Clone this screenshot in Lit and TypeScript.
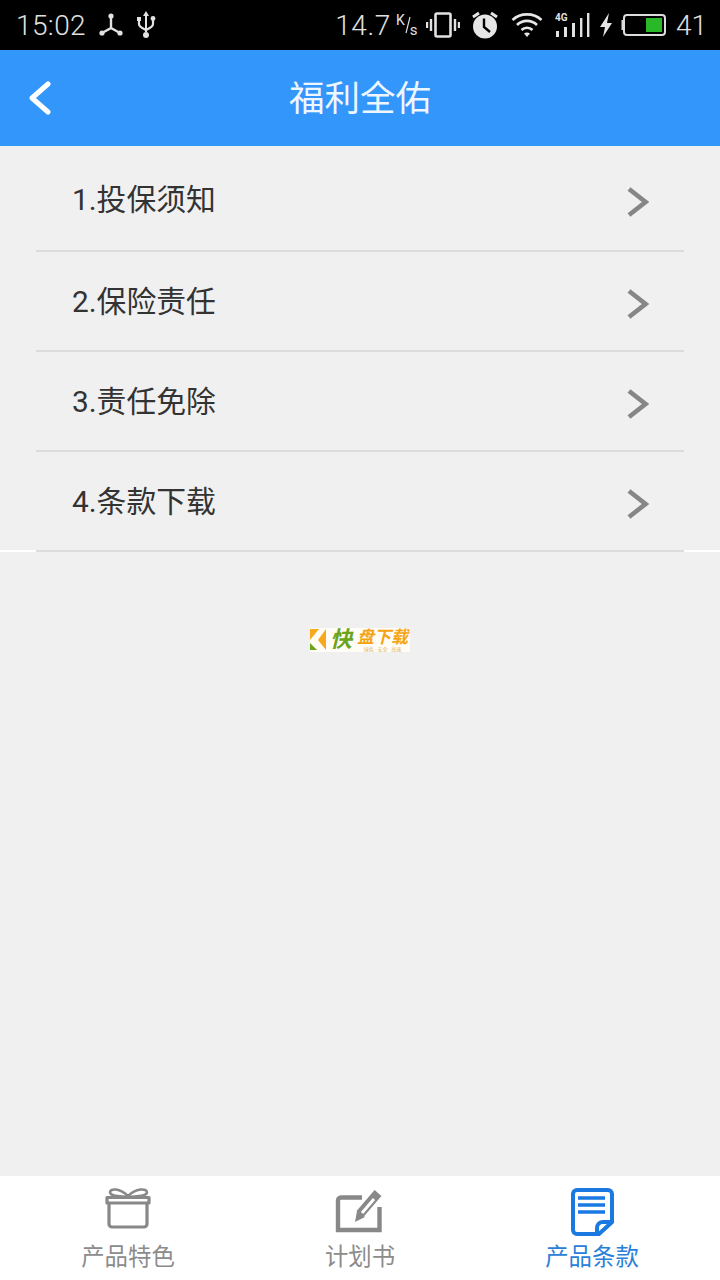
import { LitElement, html, css } from "lit";
import { customElement } from "lit/decorators.js";

const items = ["1.投保须知", "2.保险责任", "3.责任免除", "4.条款下载"];

@customElement("app-root")
export class AppRoot extends LitElement {
  static styles = css`
    :host { display: flex; flex-direction: column; width: 720px; height: 1280px; background: #f0f0f0; font-family: Roboto, "Noto Sans CJK SC", sans-serif; overflow: hidden; }
    .status { height: 50px; flex: none; background: #000; color: #e0e0e0; display: flex; align-items: center; padding: 0 13px 0 16px; box-sizing: border-box; font-weight: 300; }
    .time { font-size: 28px; width: 83px; letter-spacing: 0.4px; }
    .speed { font-size: 28px; margin-left: auto; letter-spacing: 0.6px; }
    .unit { width: 30px; margin-left: 5px; display: flex; height: 30px; font-size: 14px; font-weight: 400; line-height: 14px; }
    .unit .k { margin-top: 3px; }
    .unit .s { margin-top: 13px; margin-left: -1px; font-size: 15px; line-height: 15px; }
    .status svg { flex: none; display: block; }
    .level { font-size: 28px; margin-left: 9px; }
    .bar { height: 96px; flex: none; background: #3296fa; display: grid; place-items: center; position: relative; color: #eef6ff; font-size: 35.5px; line-height: 98px; }
    .back { position: absolute; left: 29px; top: 31px; }
    .main { flex: 1; display: flex; flex-direction: column; }
    .list { display: flex; flex-direction: column; position: relative; z-index: 1; }
    .row { height: 100px; margin: 0 36px; box-sizing: border-box; border-bottom: 2px solid #dcdcdc; display: flex; align-items: center; justify-content: space-between; padding: 0 35px 0 36px; font-size: 29.8px; color: #333; line-height: 100px; }
    .row:first-child { height: 106px; padding-top: 2px; }
    .row span { position: relative; top: 1px; }
    .row svg { position: relative; top: 3px; }
    .white { height: 2px; background: #fff; margin-top: -2px; flex: none; }
    .logo { margin: 76px auto 0; width: 100px; height: 24px; background: #fffdf5; display: flex; align-items: center; overflow: hidden; }
    .logo svg { flex: none; }
    .kuai { color: #6aa31c; font-size: 22px; font-weight: 700; font-style: italic; line-height: 24px; margin-left: 4px; }
    .logo-r { display: flex; flex-direction: column; align-items: center; margin-left: 5px; }
    .dl { color: #f6a313; font-size: 17px; font-weight: 700; font-style: italic; line-height: 17px; }
    .tiny { color: #d9b36a; font-size: 5px; line-height: 6px; }
    .tabs { height: 104px; flex: none; background: #fff; display: grid; grid-template-columns: repeat(3, 232px); padding: 0 12px; }
    .tab { display: flex; flex-direction: column; align-items: center; color: #8c8c8c; font-size: 23.4px; padding-top: 11px; }
    .tab.on { color: #2a80d8; }
    .ico { height: 46px; flex: none; }
    .ico svg { display: block; overflow: visible; }
    .lab { line-height: 32px; margin-top: 8px; }
  `;

  render() {
    return html`
      <div class="status">
        <span class="time">15:02</span>
        <svg width="26" height="26" viewBox="0 0 26 26" fill="#e2e2e2" stroke="#e2e2e2">
          <path d="M12 4V16L3 21M12 16L21 21" fill="none" stroke-width="2.4"/>
          <circle cx="12" cy="4" r="2.6" stroke="none"/><circle cx="3" cy="21" r="2.6" stroke="none"/><circle cx="21" cy="21" r="2.6" stroke="none"/>
        </svg>
        <svg width="22" height="30" viewBox="0 0 22 30" style="margin-left:10px" fill="#e2e2e2">
          <path d="M11 1l3 5h-2v16h-2V6H8z"/>
          <path d="M4 9v5c0 3 3 4 7 6 4-2 7-3 7-6V9" fill="none" stroke="#e2e2e2" stroke-width="2.2"/>
          <rect x="2" y="7" width="4" height="4" /><circle cx="18" cy="8.5" r="2.4"/><circle cx="11" cy="25" r="3"/>
        </svg>
        <span class="speed">14.7</span>
        <span class="unit"><span class="k">K</span><svg width="6" height="20" viewBox="0 0 6 20" style="margin-top:5px"><path d="M5 2L1 18" stroke="#e0e0e0" stroke-width="1.2"/></svg><span class="s">s</span></span>
        <svg width="34" height="26" viewBox="0 0 34 26" fill="none" stroke="#e2e2e2">
          <rect x="9.5" y="1.5" width="15" height="23" rx="1.5" stroke-width="2.6"/>
          <path d="M5 7v12M1 10v6M29 7v12M33 10v6" stroke-width="2.4"/>
        </svg>
        <svg width="30" height="28" viewBox="0 0 30 28" style="margin-left:10px">
          <circle cx="15" cy="15.5" r="12" fill="#e6e6e6"/>
          <path d="M3 6l6-4M27 6l-6-4" stroke="#e6e6e6" stroke-width="3"/>
          <path d="M14 7.5V16l6 5" fill="none" stroke="#000" stroke-width="2.4"/>
        </svg>
        <svg width="32" height="26" viewBox="0 0 32 26" style="margin-left:11px" fill="none" stroke="#e6e6e6" stroke-width="2.6">
          <path d="M1.5 8C9.5 0.5 22.5 0.5 30.5 8"/><path d="M6 13C11.5 7.5 20.5 7.5 26 13"/><path d="M10.5 18C13.5 15 18.5 15 21.5 18"/>
          <path d="M13 21.5L16 25L19 21.5C17 20 15 20 13 21.5Z" fill="#e6e6e6" stroke="none"/>
        </svg>
        <svg width="36" height="26" viewBox="0 0 36 26" style="margin-left:12px" fill="#e2e2e2">
          <text x="0" y="9" font-size="10" font-family="Roboto, sans-serif" font-weight="700">4G</text>
          <rect x="1" y="19" width="3" height="6"/><rect x="9" y="15" width="3" height="10"/><rect x="17" y="11" width="3" height="14"/><rect x="25" y="6" width="2.4" height="19"/><rect x="32" y="1" width="2.4" height="24"/>
        </svg>
        <svg width="14" height="24" viewBox="0 0 14 24" style="margin-left:8px" fill="#e6e6e6"><path d="M10 0L1 14h5l-2 10 9-14H8z"/></svg>
        <svg width="46" height="26" viewBox="0 0 46 26" style="margin-left:8px">
          <rect x="3" y="3" width="41" height="20" rx="3" fill="none" stroke="#dcdcdc" stroke-width="2"/>
          <rect x="0.5" y="8" width="2" height="10" fill="#dcdcdc"/>
          <rect x="25" y="6" width="16" height="14" fill="#28b828"/>
        </svg>
        <span class="level">41</span>
      </div>
      <div class="bar">
        <svg class="back" width="22" height="34" viewBox="0 0 22 34" fill="none" stroke="#fff" stroke-width="5" stroke-linecap="round" stroke-linejoin="round"><path d="M19 3L3 17L19 31"/></svg>
        福利全佑
      </div>
      <div class="main">
        <div class="list">
          ${items.map((t) => html`
            <div class="row"><span>${t}</span>
              <svg width="22" height="30" viewBox="0 0 22 30" fill="none" stroke="#868686" stroke-width="4.6"><path d="M2 2L18.5 15L2 28"/></svg>
            </div>`)}
        </div>
        <div class="white"></div>
        <div class="logo">
          <svg width="16" height="22" viewBox="0 0 16 22">
            <path d="M0 0H9L0 11Z" fill="#f7a81b"/>
            <path d="M16 0V21L8 11Z" fill="#f7a81b"/>
            <path d="M0 21V14L7 21Z" fill="#6aa31c"/>
          </svg>
          <span class="kuai">快</span>
          <div class="logo-r"><span class="dl">盘下载</span><span class="tiny">绿色 · 安全 · 高速</span></div>
        </div>
      </div>
      <div class="tabs">
        <div class="tab">
          <div class="ico">
            <svg width="46" height="44" viewBox="0 0 46 44" fill="none" stroke="#888" stroke-width="3.2" stroke-linejoin="round">
              <path d="M4 16V37a3 3 0 0 0 3 3H39a3 3 0 0 0 3-3V16"/>
              <path d="M2 10.5H44V16H2Z"/>
              <path d="M23 10C17 9 6 10 5 5.5C5 1 15 1 23 9C31 1 42 1 42 5.5C41 10 30 9 23 10Z" stroke-width="2.6"/>
            </svg>
          </div>
          <div class="lab">产品特色</div>
        </div>
        <div class="tab">
          <div class="ico">
            <svg width="50" height="46" viewBox="0 0 50 46" fill="none">
              <path d="M27 10.5H6a3 3 0 0 0-3 3V43H44.5V20" stroke="#888" stroke-width="4.4"/>
              <path d="M25 27L43 6" stroke="#888" stroke-width="9"/>
              <path d="M27 26L39 12" stroke="#fff" stroke-width="3"/>
              <path d="M20 35L22 24L30 30Z" fill="#888"/>
            </svg>
          </div>
          <div class="lab">计划书</div>
        </div>
        <div class="tab on">
          <div class="ico">
            <svg width="46" height="50" viewBox="0 0 46 50" fill="none">
              <path d="M8 3H39a4 4 0 0 1 4 4V35L30 47H8a4 4 0 0 1-4-4V7a4 4 0 0 1 4-4Z" stroke="#1a7ae2" stroke-width="4" fill="#fff"/>
              <path d="M9 11H36M9 18H36M9 25H36" stroke="#1a7ae2" stroke-width="3.6"/>
              <path d="M44 35H34a6 6 0 0 0-6 6V47" stroke="#1a7ae2" stroke-width="4"/>
            </svg>
          </div>
          <div class="lab">产品条款</div>
        </div>
      </div>
    `;
  }
}
